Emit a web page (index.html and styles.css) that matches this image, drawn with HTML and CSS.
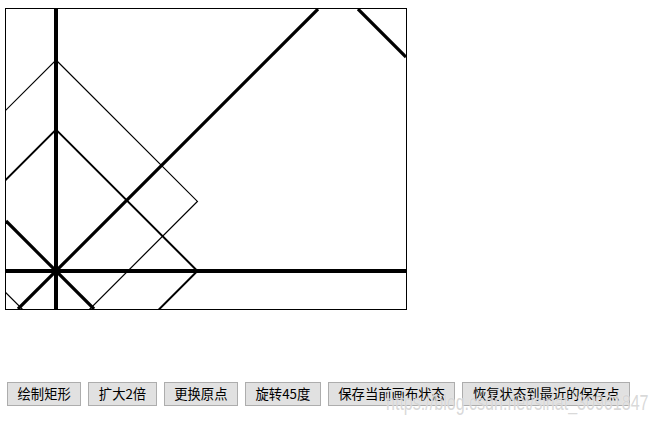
FILE: index.html
```html
<!DOCTYPE html>
<html lang="zh-CN">
<head>
<meta charset="utf-8">
<title>Canvas 变换</title>
<link rel="stylesheet" href="styles.css">
</head>
<body>
<div class="stage">
  <svg class="canvas" width="400" height="300" viewBox="0 0 400 300" xmlns="http://www.w3.org/2000/svg">
    <g fill="none" stroke="#000">
      <polygon points="50,51 191.42,192.42 50,333.84 -91.42,192.42" stroke-width="1.2"/>
      <polygon points="50,120.6 191.42,262 50,403.4 -91.42,262" stroke-width="2"/>
      <line x1="50" y1="0" x2="50" y2="300" stroke-width="4"/>
      <line x1="0" y1="262" x2="400" y2="262" stroke-width="4"/>
      <line x1="12" y1="300" x2="312" y2="0" stroke-width="3.2"/>
      <line x1="0" y1="212" x2="88" y2="300" stroke-width="3.2"/>
      <line x1="352" y1="0" x2="400" y2="48" stroke-width="3.2"/>
    </g>
  </svg>
  <div class="toolbar">
    <button class="btn">绘制矩形</button>
    <button class="btn">扩大2倍</button>
    <button class="btn">更换原点</button>
    <button class="btn">旋转45度</button>
    <button class="btn">保存当前画布状态</button>
    <button class="btn">恢复状态到最近的保存点</button>
  </div>
  <div class="watermark">https://blog.csdn.net/sinat_30961847</div>
</div>
</body>
</html>
```
FILE: styles.css
```css
html, body {
  margin: 0;
  padding: 0;
  background: #fff;
}

.stage {
  position: relative;
  width: 656px;
  height: 425px;
  padding: 8px 0 0 5px;
  box-sizing: border-box;
}

.canvas {
  display: block;
  border: 1px solid #000;
  background: #fff;
  overflow: hidden;
}

.toolbar {
  display: flex;
  gap: 7px;
  margin-top: 72px;
  padding-left: 2px;
}

.btn {
  height: 24px;
  padding: 0 9.5px;
  margin: 0;
  border: 1px solid #adadad;
  background: #e1e1e1;
  color: #000;
  font-family: "Noto Sans CJK SC", "Liberation Sans", sans-serif;
  font-size: 13.33px;
  line-height: 22px;
  white-space: nowrap;
}

.watermark {
  position: absolute;
  left: 386px;
  top: 390px;
  font-family: "Liberation Sans", Arial, sans-serif;
  font-size: 22px;
  line-height: 26px;
  color: rgba(200, 200, 200, 0.7);
  text-shadow: 0 0 1px rgba(255, 255, 255, 0.8);
  transform: scaleX(0.73);
  transform-origin: left top;
  white-space: nowrap;
  pointer-events: none;
}
```
